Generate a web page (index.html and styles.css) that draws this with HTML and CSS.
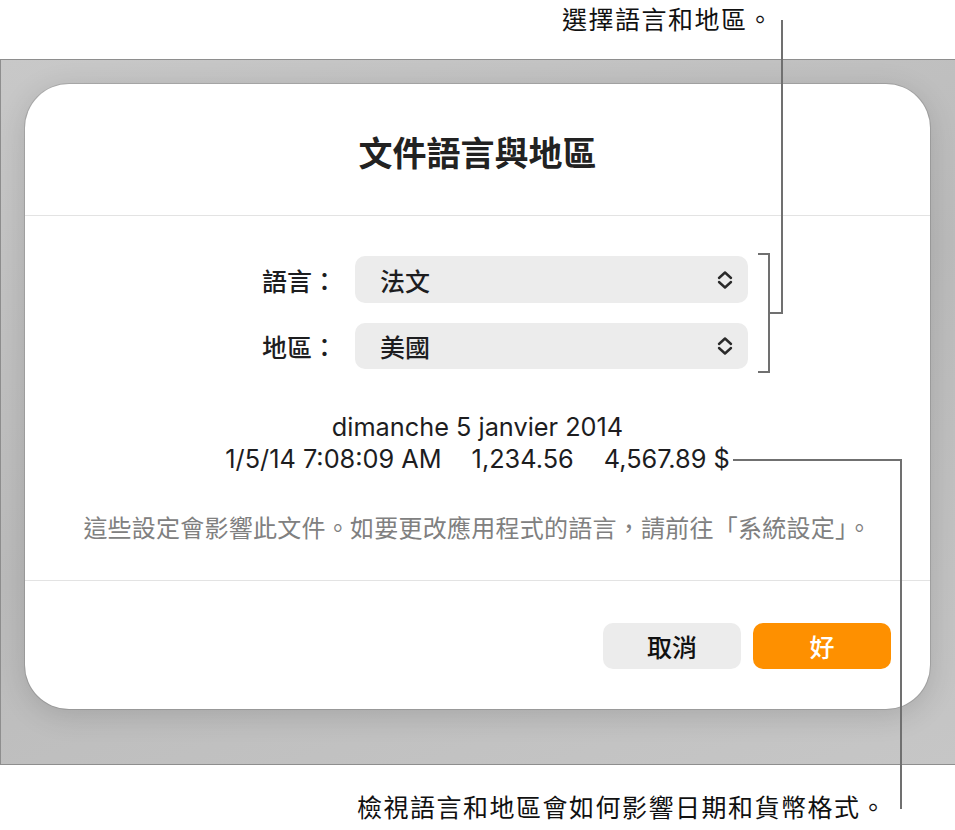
FILE: index.html
```html
<!DOCTYPE html>
<html lang="zh-Hant">
<head>
<meta charset="utf-8">
<title>文件語言與地區</title>
<link rel="stylesheet" href="styles.css">
</head>
<body>
<div class="page">
  <div class="top-callout"><span class="callout-text">選擇語言和地區。</span></div>
  <div class="panel">
    <div class="dialog">
      <div class="dialog-header"><h1 class="title">文件語言與地區</h1></div>
      <div class="form">
        <div class="label">語言：</div>
        <div class="popup"><span>法文</span>
          <svg class="chev" width="18" height="22" viewBox="0 0 18 22"><path d="M3 9 L9 3.5 L15 9 M3 13 L9 18.5 L15 13" fill="none" stroke="#2a2a2a" stroke-width="2.4" stroke-linecap="round" stroke-linejoin="round"/></svg>
        </div>
        <div class="label">地區：</div>
        <div class="popup"><span>美國</span>
          <svg class="chev" width="18" height="22" viewBox="0 0 18 22"><path d="M3 9 L9 3.5 L15 9 M3 13 L9 18.5 L15 13" fill="none" stroke="#2a2a2a" stroke-width="2.4" stroke-linecap="round" stroke-linejoin="round"/></svg>
        </div>
      </div>
      <div class="preview">
        <div>dimanche 5 janvier 2014</div>
        <div class="preview-nums"><span>1/5/14 7:08:09 AM</span><span>1,234.56</span><span>4,567.89 $</span></div>
      </div>
      <p class="note">這些設定會影響此文件。如要更改應用程式的語言，請前往「系統設定」。</p>
      <div class="footer">
        <button class="btn btn-cancel">取消</button>
        <button class="btn btn-ok">好</button>
      </div>
    </div>
  </div>
  <div class="bottom-callout"><span class="callout-text">檢視語言和地區會如何影響日期和貨幣格式。</span></div>
  <svg class="leaders" width="955" height="830" viewBox="0 0 955 830">
    <g fill="none" stroke="#707070" stroke-width="2">
      <path d="M782 20 V313 H769"/>
      <path d="M758 254 H769 V372 H758"/>
      <path d="M733 460 H901 V809"/>
    </g>
  </svg>
</div>
</body>
</html>
```
FILE: styles.css
```css
* { box-sizing: border-box; }
html, body { margin: 0; padding: 0; background: #fff; }
body {
  font-family: Inter, "Noto Sans CJK TC", sans-serif;
  color: #1d1d1f;
}
.page {
  position: relative;
  width: 955px;
  height: 830px;
  overflow: hidden;
}
.top-callout {
  height: 59px;
  padding-left: 562px;
  padding-top: 2px;
}
.callout-text {
  font-family: "Noto Sans CJK TC", sans-serif;
  font-size: 25px;
  letter-spacing: 1.5px;
  line-height: 32px;
  color: #111;
}
.panel {
  height: 706px;
  border: 1px solid #8e8e8e;
  border-right: 0;
  background: linear-gradient(160deg, #c8c8c8 0%, #bbbbbb 50%, #c6c6c6 100%);
  padding: 24px 24px 0 24px;
}
.dialog {
  width: 905px;
  height: 625px;
  background: #fff;
  border-radius: 44px;
  box-shadow: 0 0 0 1px rgba(0,0,0,0.12), 0 6px 30px rgba(0,0,0,0.14);
  display: flex;
  flex-direction: column;
}
.dialog-header {
  padding: 48px 0 43px;
  border-bottom: 1px solid #e3e3e3;
  text-align: center;
}
.title {
  margin: 0;
  font-family: "Noto Sans CJK TC", sans-serif;
  font-size: 34px;
  line-height: 40px;
  font-weight: 700;
  color: #222;
}
.form {
  display: grid;
  grid-template-columns: 93px 393px;
  grid-template-rows: 47px 46px;
  row-gap: 20px;
  padding: 40px 0 0 237px;
  align-items: center;
}
.label {
  font-family: "Noto Sans CJK TC", sans-serif;
  font-size: 25px;
  line-height: 32px;
  font-weight: 500;
  color: #1d1d1f;
}
.popup {
  height: 100%;
  background: #ececec;
  border-radius: 10px;
  display: flex;
  align-items: center;
  justify-content: space-between;
  padding: 0 14px 0 25px;
  font-family: "Noto Sans CJK TC", sans-serif;
  font-size: 25px;
  font-weight: 500;
}
.chev { display: block; }
.preview {
  margin-top: 42px;
  text-align: center;
  font-size: 25.3px;
  line-height: 32px;
  color: #1d1d1f;
}
.preview-nums {
  display: flex;
  justify-content: center;
  gap: 30px;
}
.note {
  margin: 36px 0 0;
  text-align: center;
  font-family: "Noto Sans CJK TC", sans-serif;
  font-size: 24px;
  letter-spacing: 0.25px;
  line-height: 32px;
  color: #808080;
  padding-bottom: 37px;
  border-bottom: 1px solid #e3e3e3;
}
.footer {
  display: flex;
  justify-content: flex-end;
  gap: 12px;
  padding: 42px 39px 0 0;
}
.btn {
  width: 138px;
  height: 46px;
  border: 0;
  border-radius: 10px;
  font-family: "Noto Sans CJK TC", sans-serif;
  font-size: 25px;
  font-weight: 500;
  padding: 0;
}
.btn-cancel { background: #ececec; color: #111; }
.btn-ok { background: #fe9000; color: #fff; }
.bottom-callout {
  padding: 25px 0 0 357px;
}
.leaders {
  position: absolute;
  left: 0;
  top: 0;
  pointer-events: none;
}
```
